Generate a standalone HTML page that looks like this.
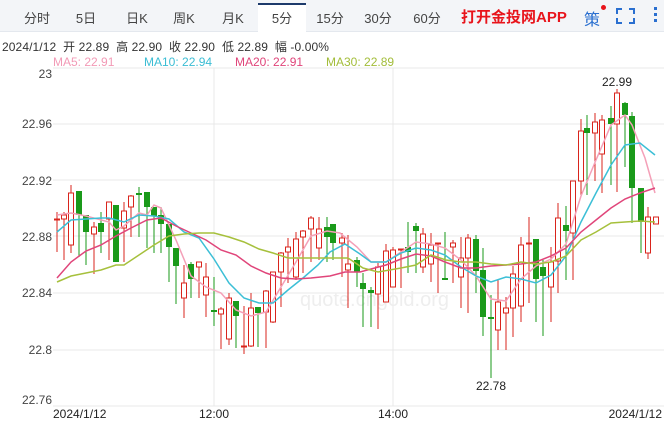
<!DOCTYPE html><html><head><meta charset="utf-8"><style>
body{margin:0;width:664px;height:421px;overflow:hidden;background:#fff;font-family:"Liberation Sans","Noto Sans CJK SC",sans-serif;}
.bar{position:absolute;left:0;top:0;width:664px;height:31px;background:#f3f5f8;border-bottom:1px solid #e4e8ee;}
.t{position:absolute;top:8px;font-size:13px;color:#444;transform:translateX(-50%);}
.act{position:absolute;left:258px;top:3px;width:48px;height:29px;background:#fff;border-top:2px solid #1d3a6b;}
</style></head><body>
<div class="bar"></div><div class="act"></div>
<span class="t" style="left:37px">分时</span><span class="t" style="left:86px">5日</span><span class="t" style="left:137px">日K</span><span class="t" style="left:184px">周K</span><span class="t" style="left:233px">月K</span><span class="t" style="left:282px">5分</span><span class="t" style="left:330px">15分</span><span class="t" style="left:378px">30分</span><span class="t" style="left:427px">60分</span>
<span style="position:absolute;left:461px;top:6px;font-size:15px;font-weight:bold;color:#e8141b">打开金投网APP</span>
<span style="position:absolute;left:584px;top:6px;font-size:16px;color:#2a6fd0">策</span>
<span style="position:absolute;left:601px;top:5px;width:5px;height:5px;border-radius:50%;background:#e8141b"></span>
<div style="position:absolute;left:2px;top:38px;font-size:12px;color:#333;white-space:pre;letter-spacing:0.1px">2024/1/12  开 22.89  高 22.90  收 22.90  低 22.89  幅 -0.00%</div>
<svg style="position:absolute;left:0;top:0" width="664" height="421">
<g stroke="#2a6fd0" stroke-width="2" fill="none"><path d="M617 14v-5h5M629 9h5v5M634 18v5h-5M622 23h-5v-5"/></g>
<g fill="#2a6fd0"><rect x="654" y="7" width="3" height="3"/><rect x="654" y="13" width="3" height="3"/><rect x="654" y="19" width="3" height="3"/></g>
<text x="53" y="66" font-size="12" fill="#f29ab6">MA5: 22.91</text>
<text x="144" y="66" font-size="12" fill="#3bbdd4">MA10: 22.94</text>
<text x="235" y="66" font-size="12" fill="#e0457a">MA20: 22.91</text>
<text x="326" y="66" font-size="12" fill="#a3bd3a">MA30: 22.89</text>
<g stroke="#e8e8e8" stroke-width="1">
<line x1="53" y1="68" x2="664" y2="68"/><line x1="53" y1="124" x2="664" y2="124"/><line x1="53" y1="180" x2="664" y2="180"/><line x1="53" y1="236" x2="664" y2="236"/><line x1="53" y1="293" x2="664" y2="293"/><line x1="53" y1="350" x2="664" y2="350"/><line x1="53" y1="406" x2="664" y2="406"/>
<line x1="214" y1="68" x2="214" y2="406"/><line x1="393" y1="68" x2="393" y2="406"/></g>
<g font-size="12" fill="#444" text-anchor="end">
<text x="52" y="78">23</text><text x="52" y="128">22.96</text><text x="52" y="185">22.92</text><text x="52" y="241">22.88</text><text x="52" y="297">22.84</text><text x="52" y="354">22.8</text><text x="52" y="404">22.76</text></g>
<g font-size="12" fill="#222"><text x="53" y="418">2024/1/12</text><text x="214" y="418" text-anchor="middle">12:00</text><text x="393" y="418" text-anchor="middle">14:00</text><text x="662" y="418" text-anchor="end">2024/1/12</text>
<text x="617" y="86" text-anchor="middle">22.99</text><text x="491" y="390" text-anchor="middle">22.78</text></g>
<text x="300" y="306" font-size="20" fill="#eeeeee">quote.cngold.org</text>
<g id="c"></g>
<g fill="none" stroke-width="1.5">
<polyline stroke="#f4a0b8" points="57,215 71,213 86,216 109,222 116,230 124,226 139,213 147,215 154,205 161,208 176,240 191,276 206,287 221,293 236,310 251,316 266,312 281,287 296,262 311,236 327,231 340,233 357,247 371,262 386,262 401,252 416,242 431,244 445,248 461,260 476,276 491,299 506,301 521,279 536,266 551,259 566,244 581,196 596,160 611,125 625,115 632,125 645,158 655,193"/>
<polyline stroke="#3cbfd6" points="57,232 71,220 86,219 101,218 109,218 124,222 139,215 154,216 169,219 184,232 199,238 214,259 229,283 244,298 259,303 273,303 288,290 303,278 318,265 330,252 345,244 360,254 371,262 386,262 401,253 416,248 431,250 445,255 461,267 476,276 491,282 506,277 521,279 536,283 551,275 566,256 581,222 596,193 611,165 625,145 640,143 655,155"/>
<polyline stroke="#e0457a" points="57,278 71,262 86,251 101,245 116,236 131,228 147,220 161,218 176,226 191,233 206,240 221,250 236,255 251,266 266,273 281,278 296,279 311,278 330,276 345,272 360,272 386,265 401,259 416,254 431,256 445,262 461,268 476,268 491,266 506,265 521,264 536,262 551,256 566,248 581,232 596,220 611,208 625,199 640,193 655,188"/>
<polyline stroke="#a6c03c" points="57,282 71,276 86,273 101,270 116,265 124,265 139,255 154,245 169,236 184,234 199,233 214,233 229,237 244,242 259,249 273,253 288,258 303,258 318,258 333,258 348,258 363,268 378,272 401,268 416,265 431,255 446,260 461,262 476,262 491,264 506,265 521,262 536,264 551,262 566,256 581,240 596,232 611,223 625,222 640,221 655,222"/>
</g>
</svg>
<script>
var d=[[57,'r',219,219,212,252],[64,'r',215,219,212,260],[71,'r',193,245,185,253],[79,'g',191,215,191,257],[86,'g',215,232,215,265],[94,'r',227,234,222,274],[101,'g',223,232,212,253],[109,'r',202,219,202,260],[116,'g',205,262,205,262],[124,'r',211,228,202,262],[131,'r',196,207,195,237],[139,'g',193,193,187,237],[147,'g',192,207,192,248],[154,'g',207,216,207,253],[161,'g',215,224,207,253],[169,'g',224,247,224,282],[176,'g',248,266,248,304],[184,'r',283,298,265,318],[191,'g',264,279,262,298],[199,'r',262,267,262,298],[206,'r',277,295,263,317],[214,'g',310,310,277,326],[221,'r',309,314,307,349],[229,'r',298,339,293,345],[236,'g',301,316,301,348],[244,'r',346,346,306,354],[251,'r',308,346,293,347],[258,'g',307,313,307,347],[266,'r',291,312,290,348],[273,'r',272,322,272,323],[281,'r',253,272,252,307],[288,'r',247,252,238,283],[296,'r',239,277,232,280],[303,'r',231,237,230,273],[311,'r',218,229,216,262],[319,'r',229,248,217,260],[327,'g',227,237,217,262],[333,'g',224,243,224,260],[342,'r',238,243,233,277],[348,'r',264,270,235,308],[357,'g',260,272,257,287],[363,'g',283,289,273,327],[371,'g',290,293,287,327],[378,'r',267,294,263,329],[386,'r',251,302,244,302],[393,'r',250,287,247,287],[401,'r',249,249,249,288],[408,'g',247,252,222,273],[416,'g',226,231,223,273],[423,'r',234,267,228,273],[431,'r',245,264,233,282],[438,'r',243,243,243,293],[445,'g',278,278,232,279],[453,'r',243,247,240,283],[461,'r',258,277,237,308],[468,'r',238,258,234,313],[476,'g',239,271,235,293],[483,'g',270,317,248,336],[491,'g',317,317,295,378],[498,'r',302,330,280,350],[506,'r',308,313,297,350],[513,'r',274,308,266,337],[521,'r',245,306,237,322],[529,'r',243,243,217,303],[536,'g',239,279,239,322],[543,'g',267,276,260,336],[551,'r',262,287,247,322],[558,'r',218,261,203,293],[566,'g',225,231,206,280],[573,'r',181,233,181,280],[581,'r',131,181,119,195],[587,'g',128,133,115,195],[595,'r',122,133,113,181],[602,'r',120,154,115,193],[611,'g',118,124,106,185],[617,'r',93,124,89,192],[625,'g',103,115,102,167],[632,'g',116,188,112,223],[641,'g',188,222,188,253],[648,'r',217,253,207,259],[656,'r',217,224,217,224]];
var s='';d.forEach(function(c){var col=c[1]=='r'?'#d9241c':'#1a9a1a';var x=c[0];s+='<line x1="'+x+'" y1="'+c[4]+'" x2="'+x+'" y2="'+c[5]+'" stroke="'+col+'"/>';var h=Math.max(c[3]-c[2],1);if(c[1]=='r')s+='<rect x="'+(x-2.5)+'" y="'+c[2]+'" width="5" height="'+h+'" fill="#fff" stroke="'+col+'"/>';else s+='<rect x="'+(x-3)+'" y="'+c[2]+'" width="6" height="'+Math.max(h,2)+'" fill="'+col+'"/>';});
document.getElementById('c').innerHTML=s;
</script>
</body></html>
